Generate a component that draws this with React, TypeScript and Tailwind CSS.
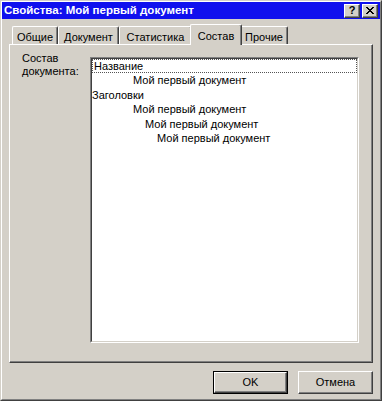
import React from "react";

const font = { fontFamily: '"Liberation Sans", Arial, sans-serif' };

function Tab({ label, w, selected }: { label: string; w: string; selected?: boolean }) {
  if (selected) {
    return (
      <div
        className={`relative z-10 -mx-[2px] -mb-[1px] h-[21px] ${w} flex items-start justify-center pt-[3px] bg-[#d4d0c8] border-l border-t border-white border-r border-r-[#404040] rounded-t-[2px] shadow-[inset_-1px_0_0_#808080] text-[11px] text-black`}
      >
        {label}
      </div>
    );
  }
  return (
    <div
      className={`h-[18px] ${w} flex items-start justify-center pt-[2px] bg-[#d4d0c8] border-l border-t border-white border-r border-r-[#404040] rounded-t-[2px] shadow-[inset_-1px_0_0_#808080] text-[11px] text-black`}
    >
      {label}
    </div>
  );
}

function Btn({ label, def }: { label: string; def?: boolean }) {
  const inner = (
    <div className="flex-1 flex items-center justify-center border border-t-white border-l-white border-r-[#404040] border-b-[#404040] shadow-[inset_-1px_-1px_0_#808080] text-[11px] text-black">
      {label}
    </div>
  );
  return def ? (
    <div className="w-[75px] h-[23px] flex border border-black">{inner}</div>
  ) : (
    <div className="w-[75px] h-[23px] flex">{inner}</div>
  );
}

export default function App() {
  const rows: { text: string; indent: number; focus?: boolean }[] = [
    { text: "Название", indent: 0, focus: true },
    { text: "Мой первый документ", indent: 41 },
    { text: "Заголовки", indent: 0 },
    { text: "Мой первый документ", indent: 41 },
    { text: "Мой первый документ", indent: 53 },
    { text: "Мой первый документ", indent: 65 },
  ];
  return (
    <div className="w-[382px] h-[401px] bg-[#d4d0c8] border border-t-[#d4d0c8] border-l-[#d4d0c8] border-r-[#404040] border-b-[#404040]" style={font}>
      <div className="w-full h-full flex flex-col border border-t-white border-l-white border-r-[#808080] border-b-[#808080]">
        {/* title bar */}
        <div className="h-[17px] bg-[#1010ee] flex items-center pl-[2px] pr-[2px]">
          <div className="flex-1 text-white font-bold text-[11.5px] leading-none whitespace-nowrap">
            Свойства: Мой первый документ
          </div>
          <div className="flex gap-[2px]">
            <div className="w-[16px] h-[14px] bg-[#d4d0c8] border border-t-white border-l-white border-r-[#404040] border-b-[#404040] shadow-[inset_-1px_-1px_0_#808080] flex items-center justify-center text-[11px] font-bold leading-none text-black">
              ?
            </div>
            <div className="w-[16px] h-[14px] bg-[#d4d0c8] border border-t-white border-l-white border-r-[#404040] border-b-[#404040] shadow-[inset_-1px_-1px_0_#808080] flex items-center justify-center">
              <svg width="8" height="7" viewBox="0 0 8 7">
                <path d="M0 0L7 7M1 0L8 7M7 0L0 7M8 0L1 7" stroke="black" strokeWidth="1" />
              </svg>
            </div>
          </div>
        </div>
        {/* body */}
        <div className="flex-1 flex flex-col pl-[7px] pr-[7px] pt-[4px]">
          <div className="flex items-end h-[21px] pl-[3px]">
            <Tab label="Общие" w="w-[46px]" />
            <Tab label="Документ" w="w-[61px]" />
            <Tab label="Статистика" w="w-[73px]" />
            <Tab label="Состав" w="w-[52px]" selected />
            <Tab label="Прочие" w="w-[48px]" />
          </div>
          <div className="h-[319px] flex border border-t-white border-l-white border-r-[#404040] border-b-[#404040] shadow-[inset_-1px_-1px_0_#808080]">
            <div className="w-[80px] pl-[12px] pt-[7px] text-[11px] leading-[13px] text-black">
              Состав
              <br />
              документа:
            </div>
            <div className="mt-[12px] mb-[19px] w-[269px] flex border border-t-[#808080] border-l-[#808080] border-r-white border-b-white">
              <div className="flex-1 bg-white border border-t-[#404040] border-l-[#404040] border-r-[#d4d0c8] border-b-[#d4d0c8] flex flex-col">
                {rows.map((r, i) =>
                  r.focus ? (
                    <div key={i} className="h-[14.4px] flex items-center border border-dotted border-[#555] pl-[1px] text-[11px] text-black whitespace-nowrap">
                      {r.text}
                    </div>
                  ) : (
                    <div key={i} className="h-[14.4px] flex items-center text-[11px] text-black whitespace-nowrap" style={{ paddingLeft: r.indent }}>
                      {r.text}
                    </div>
                  )
                )}
              </div>
            </div>
          </div>
          <div className="flex justify-end gap-[10px] pt-[8px] pr-[0px]">
            <Btn label="OK" def />
            <Btn label="Отмена" />
          </div>
        </div>
      </div>
    </div>
  );
}
